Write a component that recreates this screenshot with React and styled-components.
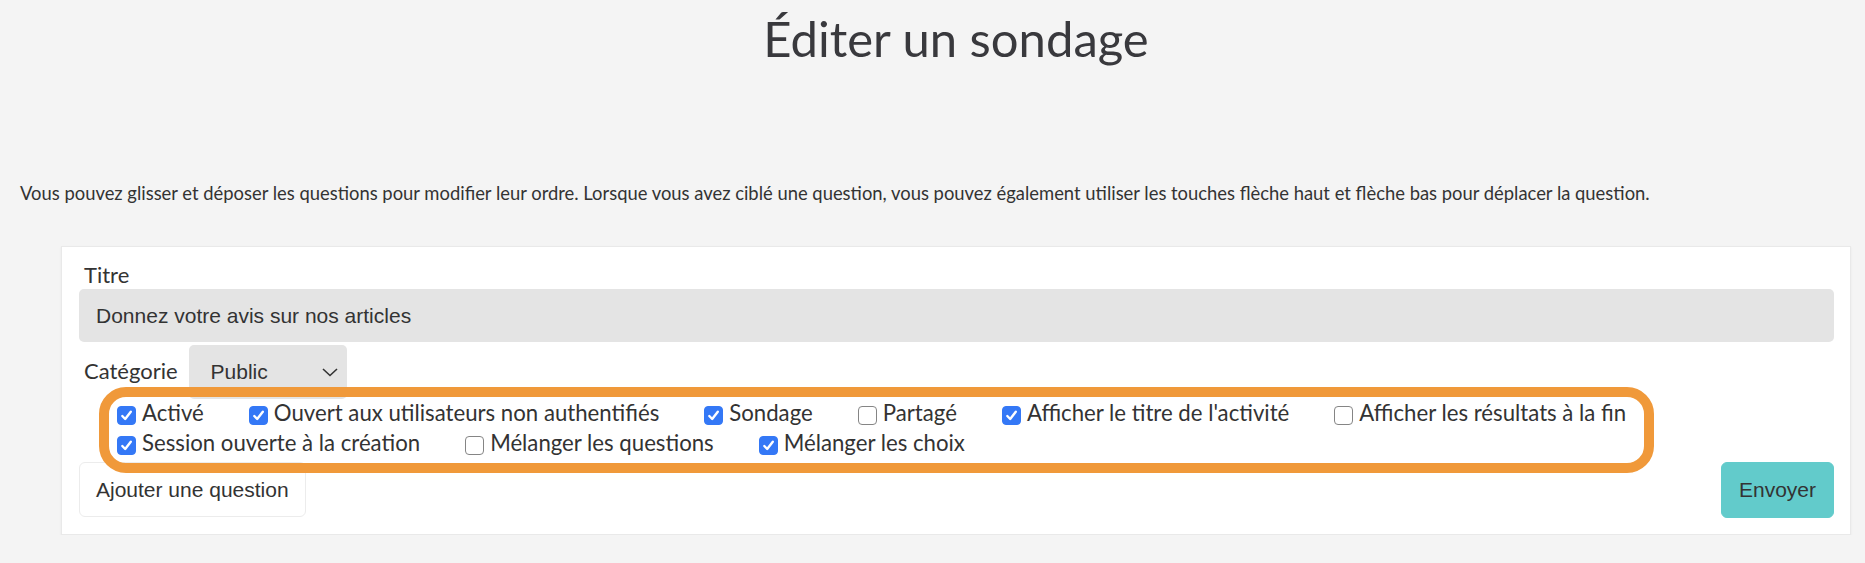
import React from "react";
import styled, { createGlobalStyle } from "styled-components";

const TEXT_COLOR = "#333333";
const FIELD_BG = "#e4e4e4";
const ORANGE = "#f0993a";
const BLUE = "#3478f6";

const GlobalStyle = createGlobalStyle`
  html, body {
    margin: 0;
    padding: 0;
    background: #f4f4f4;
  }
  body {
    font-family: Lato, "Open Sans", sans-serif;
    color: ${TEXT_COLOR};
  }
  *, *::before, *::after {
    box-sizing: border-box;
  }
`;

const Page = styled.main`
  padding: 0 14px 0 20px;
`;

const Title = styled.h1`
  margin: 0 0 0 41px;
  padding-top: 9px;
  font-size: 49px;
  line-height: 58px;
  font-weight: 400;
  text-align: center;
  color: #39393d;
`;

const Hint = styled.p`
  margin: 115px 0 0;
  font-size: 18.4px;
  line-height: 22px;
`;

const Card = styled.form`
  margin: 42px 0 0 41px;
  padding: 15px 16px 16px 17px;
  background: #fff;
  border: 1px solid #e9e9e9;
  box-shadow: 0 1px 2px rgba(0, 0, 0, 0.06);
`;

const Label = styled.label`
  display: block;
  padding-left: 5px;
  font-size: 22px;
  line-height: 25px;
`;

const TextInput = styled.input`
  display: block;
  width: 100%;
  height: 53px;
  margin-top: 2px;
  padding: 0 17px;
  border: none;
  border-radius: 5px;
  background: ${FIELD_BG};
  font-family: "Liberation Sans", Arial, sans-serif;
  font-size: 21px;
  color: ${TEXT_COLOR};
  outline: none;
`;

const CategoryRow = styled.div`
  display: flex;
  align-items: center;
  gap: 11px;
  margin-top: 3px;

  ${Label} {
    padding-bottom: 3px;
  }
`;

const SelectBox = styled.div`
  display: flex;
  align-items: center;
  justify-content: space-between;
  width: 158px;
  height: 54px;
  padding: 0 9px 0 22px;
  border-radius: 5px;
  background: ${FIELD_BG};
  font-family: "Liberation Sans", Arial, sans-serif;
  font-size: 21px;
`;

const Options = styled.div`
  position: relative;
  display: flex;
  flex-wrap: wrap;
  column-gap: 45px;
  row-gap: 2px;
  padding-left: 38px;

  &::after {
    content: "";
    position: absolute;
    left: 20px;
    top: -12px;
    width: 1555px;
    height: 86px;
    border: 10px solid ${ORANGE};
    border-radius: 27px;
    pointer-events: none;
    z-index: 2;
  }
`;

const Option = styled.label`
  display: flex;
  align-items: flex-start;
  gap: 6px;
  font-size: 22.2px;
  line-height: 28px;
  white-space: nowrap;
`;

const Box = styled.span`
  display: flex;
  align-items: center;
  justify-content: center;
  flex-shrink: 0;
  width: 19px;
  height: 19px;
  margin-top: 7px;
  border-radius: 4px;
  background: ${({ checked }) => (checked ? BLUE : "#fff")};
  border: 1px solid ${({ checked }) => (checked ? BLUE : "#858585")};
`;

const Actions = styled.div`
  display: flex;
  justify-content: space-between;
  align-items: flex-start;
  margin-top: 5px;
`;

const Button = styled.button`
  height: ${({ primary }) => (primary ? "56px" : "55px")};
  padding: 0 ${({ primary }) => (primary ? "17px" : "16px")};
  border: 1px solid ${({ primary }) => (primary ? "#62cbcb" : "#ececec")};
  border-radius: 6px;
  background: ${({ primary }) => (primary ? "#62cbcb" : "#fff")};
  font-family: "Liberation Sans", Arial, sans-serif;
  font-size: 21px;
  color: ${TEXT_COLOR};
  cursor: pointer;
`;

const options = [
  { label: "Activé", checked: true },
  { label: "Ouvert aux utilisateurs non authentifiés", checked: true },
  { label: "Sondage", checked: true },
  { label: "Partagé", checked: false },
  { label: "Afficher le titre de l'activité", checked: true },
  { label: "Afficher les résultats à la fin", checked: false },
  { label: "Session ouverte à la création", checked: true },
  { label: "Mélanger les questions", checked: false },
  { label: "Mélanger les choix", checked: true },
];

const Check = ({ checked }) => (
  <Box checked={checked}>
    {checked && (
      <svg width="13" height="13" viewBox="0 0 13 13" fill="none">
        <path
          d="M2.3 7 L5.2 10 L10.8 2.8"
          stroke="#fff"
          strokeWidth="2.4"
          strokeLinecap="round"
          strokeLinejoin="round"
        />
      </svg>
    )}
  </Box>
);

export default function App() {
  return (
    <>
      <GlobalStyle />
      <Page>
        <Title>Éditer un sondage</Title>
        <Hint>
          Vous pouvez glisser et déposer les questions pour modifier leur ordre. Lorsque vous avez
          ciblé une question, vous pouvez également utiliser les touches flèche haut et flèche bas
          pour déplacer la question.
        </Hint>
        <Card onSubmit={(e) => e.preventDefault()}>
          <Label>Titre</Label>
          <TextInput defaultValue="Donnez votre avis sur nos articles" />
          <CategoryRow>
            <Label>Catégorie</Label>
            <SelectBox>
              <span>Public</span>
              <svg width="16" height="9" viewBox="0 0 16 9" fill="none">
                <path d="M1 1 L8 7.5 L15 1" stroke="#333" strokeWidth="1.6" />
              </svg>
            </SelectBox>
          </CategoryRow>
          <Options>
            {options.map((o) => (
              <Option key={o.label}>
                <Check checked={o.checked} />
                {o.label}
              </Option>
            ))}
          </Options>
          <Actions>
            <Button type="button">Ajouter une question</Button>
            <Button type="submit" primary>
              Envoyer
            </Button>
          </Actions>
        </Card>
      </Page>
    </>
  );
}
